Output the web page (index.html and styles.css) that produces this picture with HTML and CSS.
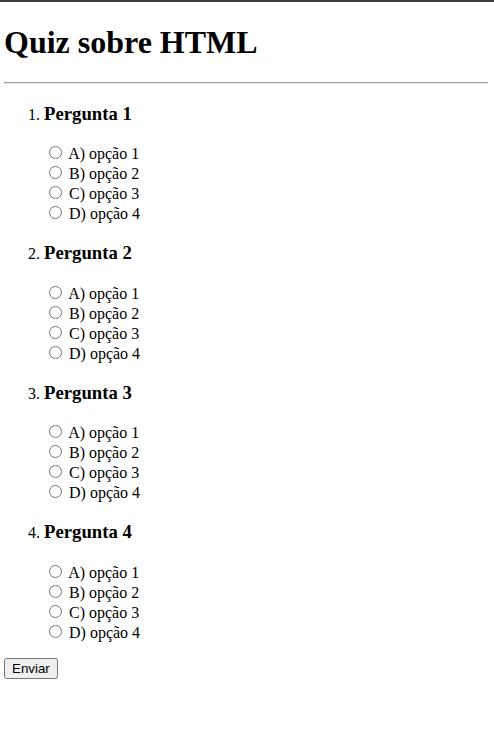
FILE: index.html
```html
<!DOCTYPE html>
<html lang="pt">
<head>
<meta charset="utf-8">
<title>Quiz sobre HTML</title>
<link rel="stylesheet" href="styles.css">
</head>
<body>
<h1 class="title">Quiz sobre HTML</h1>
<hr class="rule">
<form class="quiz">
<ol class="questions">
<li class="question">
<h3 class="q-title">Pergunta 1</h3>
<input type="radio" name="q1" id="q1a"> <label for="q1a">A) opção 1</label><br>
<input type="radio" name="q1" id="q1b"> <label for="q1b">B) opção 2</label><br>
<input type="radio" name="q1" id="q1c"> <label for="q1c">C) opção 3</label><br>
<input type="radio" name="q1" id="q1d"> <label for="q1d">D) opção 4</label>
</li>
<li class="question">
<h3 class="q-title">Pergunta 2</h3>
<input type="radio" name="q2" id="q2a"> <label for="q2a">A) opção 1</label><br>
<input type="radio" name="q2" id="q2b"> <label for="q2b">B) opção 2</label><br>
<input type="radio" name="q2" id="q2c"> <label for="q2c">C) opção 3</label><br>
<input type="radio" name="q2" id="q2d"> <label for="q2d">D) opção 4</label>
</li>
<li class="question">
<h3 class="q-title">Pergunta 3</h3>
<input type="radio" name="q3" id="q3a"> <label for="q3a">A) opção 1</label><br>
<input type="radio" name="q3" id="q3b"> <label for="q3b">B) opção 2</label><br>
<input type="radio" name="q3" id="q3c"> <label for="q3c">C) opção 3</label><br>
<input type="radio" name="q3" id="q3d"> <label for="q3d">D) opção 4</label>
</li>
<li class="question">
<h3 class="q-title">Pergunta 4</h3>
<input type="radio" name="q4" id="q4a"> <label for="q4a">A) opção 1</label><br>
<input type="radio" name="q4" id="q4b"> <label for="q4b">B) opção 2</label><br>
<input type="radio" name="q4" id="q4c"> <label for="q4c">C) opção 3</label><br>
<input type="radio" name="q4" id="q4d"> <label for="q4d">D) opção 4</label>
</li>
</ol>
<button type="submit" class="send">Enviar</button>
</form>
</body>
</html>
```
FILE: styles.css
```css
html {
  border-top: 2px solid #3f3f3f;
}
body {
  margin: 8px 6px 8px 4px;
  font-family: "Liberation Serif", "Times New Roman", serif;
  font-size: 16px;
  color: #000;
  background: #fff;
}
.title {
  font-size: 32px;
  font-weight: bold;
  margin: 14px 0 21px;
}
.rule {
  margin: 8px 0;
}
.questions {
  margin: 16px 0;
  padding-left: 40px;
}
.q-title {
  font-size: 18.72px;
  margin: 18.72px 0;
}
.send {
  font-family: "Liberation Sans", Arial, sans-serif;
  font-size: 13.333px;
}
```
